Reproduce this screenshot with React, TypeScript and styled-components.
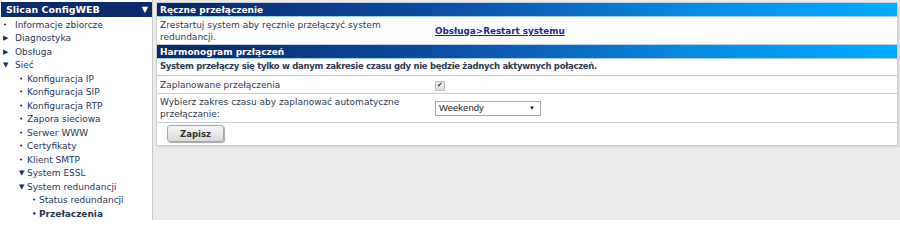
import React from "react";
import styled, { createGlobalStyle } from "styled-components";

const GlobalStyle = createGlobalStyle`
  html, body {
    margin: 0;
    padding: 0;
    background: #ffffff;
  }
  body {
    font-family: "DejaVu Sans", Verdana, sans-serif;
    font-size: 9px;
    color: #2f3a52;
  }
`;

const Page = styled.div`
  display: flex;
  width: 900px;
  height: 220px;
  overflow: hidden;
`;

const Sidebar = styled.nav`
  width: 153px;
  flex: none;
  border-right: 1px solid #c9c9c9;
  padding: 2px 0 0 1px;
  box-sizing: border-box;
`;

const SideHeader = styled.div`
  display: flex;
  align-items: center;
  justify-content: space-between;
  height: 15px;
  padding: 0 4px 0 5px;
  background: #0b2a6a;
  color: #fff;
  font-weight: bold;
  font-size: 9.5px;
`;

const Menu = styled.ul`
  list-style: none;
  margin: 0;
  padding: 1px 0 0 0;
`;

const indent = [2, 18, 31];
const markerWidth = [12, 8, 7];

const Item = styled.li<{ $level: number; $active?: boolean }>`
  display: flex;
  align-items: center;
  height: 13.5px;
  padding-left: ${(p) => indent[p.$level]}px;
  color: #2a3659;
  font-weight: ${(p) => (p.$active ? "bold" : "normal")};
  white-space: nowrap;
`;

const Marker = styled.span<{ $level: number }>`
  width: ${(p) => markerWidth[p.$level]}px;
  flex: none;
  font-size: 7px;
  color: #1b2d5c;
`;

const Main = styled.main`
  flex: 1;
  background: #ececec;
  padding: 2px 2px 0 3px;
`;

const Panel = styled.section`
  background: #fff;
  border: 1px solid #cfcfcf;
  box-shadow: 1px 1px 2px rgba(0, 0, 0, 0.12);
`;

const SectionHeader = styled.div`
  height: 13px;
  display: flex;
  align-items: center;
  padding-left: 3px;
  background: linear-gradient(to right, #0b2664 0%, #0d4fa6 40%, #0a8ee2 75%, #02abff 100%);
  color: #fff;
  font-weight: bold;
  font-size: 9px;
  border-bottom: 1px solid #8fcff5;
`;

const Row = styled.div<{ $h: number }>`
  display: grid;
  grid-template-columns: 275px 1fr;
  align-items: center;
  min-height: ${(p) => p.$h}px;
  padding: 0 3px;
  border-bottom: 1px solid #c4ccd4;
  line-height: 12px;
`;

const Label = styled.div`
  padding-right: 8px;
`;

const Note = styled.div`
  padding: 2px 3px 3px;
  font-weight: bold;
  font-size: 8.5px;
  letter-spacing: -0.3px;
  border-bottom: 1px solid #c4ccd4;
  line-height: 11px;
`;

const Link = styled.a`
  color: #1c2b8c;
  font-weight: bold;
  text-decoration: underline;
  font-size: 8.8px;
`;

const Check = styled.span`
  display: inline-flex;
  align-items: center;
  justify-content: center;
  width: 8px;
  height: 8px;
  border: 1px solid #b8b8b8;
  border-radius: 1px;
  background: linear-gradient(#f4f4f4, #dcdcdc);
  font-size: 7px;
  color: #333;
  line-height: 1;
`;

const Select = styled.div`
  display: flex;
  align-items: center;
  justify-content: space-between;
  width: 106px;
  height: 15px;
  box-sizing: border-box;
  padding: 0 5px 0 3px;
  border: 1px solid #a9a9a9;
  font-family: "Liberation Sans", Arial, sans-serif;
  font-size: 9.5px;
  color: #222;
  background: #fff;
`;

const Arrow = styled.span`
  font-size: 6px;
  color: #111;
`;

const ButtonRow = styled.div`
  padding: 2px 0 3px 10px;
`;

const Button = styled.button`
  width: 57px;
  height: 17px;
  border: 1px solid #a8a8a8;
  border-radius: 3px;
  background: linear-gradient(#f7f7f7, #d9d9d9);
  box-shadow: 1px 1px 1px rgba(0, 0, 0, 0.35);
  font-family: "DejaVu Sans", Verdana, sans-serif;
  font-size: 8.5px;
  font-weight: bold;
  color: #333;
  padding: 0;
`;

const menu: { label: string; level: number; marker: string; active?: boolean }[] = [
  { label: "Informacje zbiorcze", level: 0, marker: "•" },
  { label: "Diagnostyka", level: 0, marker: "▶" },
  { label: "Obsługa", level: 0, marker: "▶" },
  { label: "Sieć", level: 0, marker: "▼" },
  { label: "Konfiguracja IP", level: 1, marker: "•" },
  { label: "Konfiguracja SIP", level: 1, marker: "•" },
  { label: "Konfiguracja RTP", level: 1, marker: "•" },
  { label: "Zapora sieciowa", level: 1, marker: "•" },
  { label: "Serwer WWW", level: 1, marker: "•" },
  { label: "Certyfikaty", level: 1, marker: "•" },
  { label: "Klient SMTP", level: 1, marker: "•" },
  { label: "System ESSL", level: 1, marker: "▼" },
  { label: "System redundancji", level: 1, marker: "▼" },
  { label: "Status redundancji", level: 2, marker: "•" },
  { label: "Przełaczenia", level: 2, marker: "•", active: true },
];

export default function App() {
  return (
    <>
      <GlobalStyle />
      <Page>
        <Sidebar>
          <SideHeader>
            <span>Slican ConfigWEB</span>
            <span style={{ fontSize: 8 }}>▼</span>
          </SideHeader>
          <Menu>
            {menu.map((m) => (
              <Item key={m.label} $level={m.level} $active={m.active}>
                <Marker $level={m.level}>{m.marker}</Marker>
                {m.label}
              </Item>
            ))}
          </Menu>
        </Sidebar>
        <Main>
          <Panel>
            <SectionHeader>Ręczne przełączenie</SectionHeader>
            <Row $h={27}>
              <Label>Zrestartuj system aby ręcznie przełączyć system redundancji.</Label>
              <div>
                <Link href="#">Obsługa&gt;Restart systemu</Link>
              </div>
            </Row>
            <SectionHeader>Harmonogram przłączeń</SectionHeader>
            <Note>System przełączy się tylko w danym zakresie czasu gdy nie będzie żadnych aktywnych połączeń.</Note>
            <Row $h={17}>
              <Label>Zaplanowane przełączenia</Label>
              <div>
                <Check>✔</Check>
              </div>
            </Row>
            <Row $h={28}>
              <Label>Wybierz zakres czasu aby zaplanować automatyczne przełączanie:</Label>
              <div>
                <Select>
                  <span>Weekendy</span>
                  <Arrow>▼</Arrow>
                </Select>
              </div>
            </Row>
            <ButtonRow>
              <Button>Zapisz</Button>
            </ButtonRow>
          </Panel>
        </Main>
      </Page>
    </>
  );
}
